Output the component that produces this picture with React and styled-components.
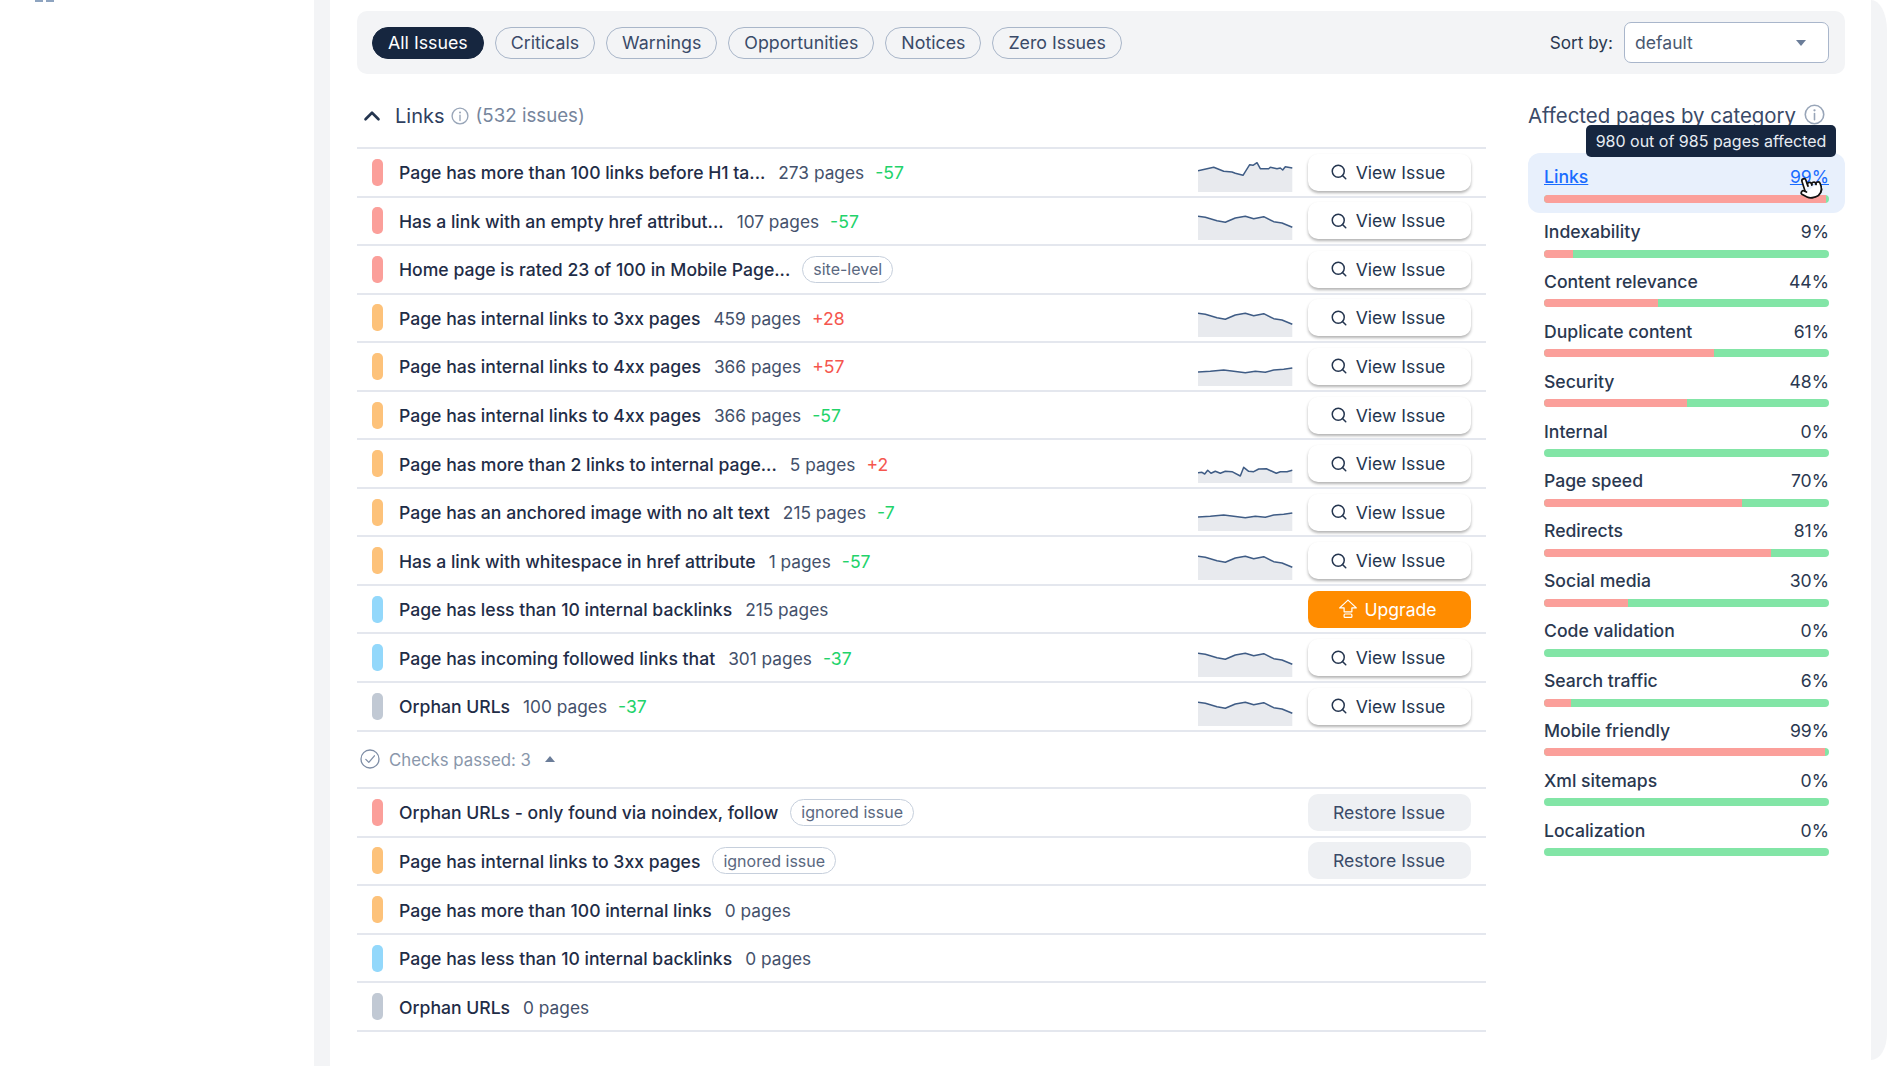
import React from "react";
import styled, { createGlobalStyle } from "styled-components";
import { Search, ChevronUp, Pointer } from "lucide-react";

const GlobalStyle = createGlobalStyle`
  html, body {
    margin: 0;
    background: #fff;
    overflow: hidden;
  }
  * {
    box-sizing: border-box;
  }
  body {
    font-family: "Inter", "Noto Sans", sans-serif;
    color: #1f2d47;
  }
`;

const LEVELS = {
  critical: "#fb9f9a",
  warning: "#fdc27a",
  notice: "#93d8fb",
  none: "#c1c9d4",
};

const pointsToPath = (pts) => pts.map((p, i) => `${i ? "L" : "M"}${p[0]} ${p[1]}`).join(" ");

const SPARKS = {
  spike: [[0, 14.7], [15.7, 11.3], [25.7, 15.3], [34, 16], [37.3, 17.3], [45, 19.3], [51.7, 8.7], [55, 9.3], [59, 6.7], [62.3, 12.7], [70.7, 12.7], [72.3, 11.3], [79, 12.7], [82.3, 12], [84.7, 14], [87.3, 10.7], [94.3, 12]],
  soft: [[0, 12.3], [7.3, 13.3], [19, 16.7], [27.3, 18.3], [37.3, 14], [47.3, 12.3], [55.7, 14.7], [65.7, 12.7], [75.7, 17.7], [84, 19], [94.3, 23.3]],
  flat: [[0, 22], [12.3, 21.3], [25.7, 20], [35.7, 21.3], [47.3, 22.7], [57.3, 21.3], [67.3, 22.3], [75.7, 20], [85.7, 19.3], [94.3, 18]],
  jagged: [[0, 25.7], [4, 25.3], [6.7, 27], [9.7, 23.3], [13, 26.3], [17.3, 24.3], [22.3, 26.3], [27.3, 24.3], [34, 24.7], [42.3, 29], [45.7, 20.3], [50.7, 24.3], [55.7, 24.7], [60.7, 22], [68.3, 21.7], [78.3, 26.3], [82.3, 24.7], [89, 24.7], [94.3, 23.3]],
};

const FILTERS = ["All Issues", "Criticals", "Warnings", "Opportunities", "Notices", "Zero Issues"];

const ISSUES = [
  { level: "critical", title: "Page has more than 100 links before H1 ta...", pages: "273 pages", delta: "-57", spark: "spike" },
  { level: "critical", title: "Has a link with an empty href attribut...", pages: "107 pages", delta: "-57", spark: "soft" },
  { level: "critical", title: "Home page is rated 23 of 100 in Mobile Page...", tag: "site-level" },
  { level: "warning", title: "Page has internal links to 3xx pages", pages: "459 pages", delta: "+28", spark: "soft" },
  { level: "warning", title: "Page has internal links to 4xx pages", pages: "366 pages", delta: "+57", spark: "flat" },
  { level: "warning", title: "Page has internal links to 4xx pages", pages: "366 pages", delta: "-57" },
  { level: "warning", title: "Page has more than 2 links to internal page...", pages: "5 pages", delta: "+2", spark: "jagged" },
  { level: "warning", title: "Page has an anchored image with no alt text", pages: "215 pages", delta: "-7", spark: "flat" },
  { level: "warning", title: "Has a link with whitespace in href attribute", pages: "1 pages", delta: "-57", spark: "soft" },
  { level: "notice", title: "Page has less than 10 internal backlinks", pages: "215 pages", upgrade: true },
  { level: "notice", title: "Page has incoming followed links that", pages: "301 pages", delta: "-37", spark: "soft" },
  { level: "none", title: "Orphan URLs", pages: "100 pages", delta: "-37", spark: "soft" },
];

const PASSED = [
  { level: "critical", title: "Orphan URLs - only found via noindex, follow", tag: "ignored issue", restore: true },
  { level: "warning", title: "Page has internal links to 3xx pages", tag: "ignored issue", restore: true },
  { level: "warning", title: "Page has more than 100 internal links", pages: "0 pages" },
  { level: "notice", title: "Page has less than 10 internal backlinks", pages: "0 pages" },
  { level: "none", title: "Orphan URLs", pages: "0 pages" },
];

// name, label shown, width of the red part of the bar
const CATEGORIES = [
  ["Links", 99, 98.8],
  ["Indexability", 9, 10],
  ["Content relevance", 44, 40],
  ["Duplicate content", 61, 59.5],
  ["Security", 48, 50],
  ["Internal", 0, 0],
  ["Page speed", 70, 69.6],
  ["Redirects", 81, 79.7],
  ["Social media", 30, 29.5],
  ["Code validation", 0, 0],
  ["Search traffic", 6, 9.5],
  ["Mobile friendly", 99, 98.6],
  ["Xml sitemaps", 0, 0],
  ["Localization", 0, 0],
];

const InfoIcon = ({ size = 18, color = "#98a5b8" }) => (
  <svg width={size} height={size} viewBox="0 0 20 20" fill="none">
    <circle cx="10" cy="10" r="8.8" stroke={color} strokeWidth="1.5" />
    <circle cx="10" cy="6" r="1.1" fill={color} />
    <path d="M10 9v6" stroke={color} strokeWidth="1.5" strokeLinecap="round" />
  </svg>
);

const CheckIcon = () => (
  <svg width="20" height="20" viewBox="0 0 20 20" fill="none">
    <circle cx="10" cy="10" r="9" stroke="#7f8ea6" strokeWidth="1.3" />
    <path d="M5.8 10.4l3 3 5.6-6.6" stroke="#7f8ea6" strokeWidth="1.3" strokeLinecap="round" strokeLinejoin="round" />
  </svg>
);

const UpgradeIcon = () => (
  <svg width="20" height="20" viewBox="0 0 18 18" fill="none" stroke="#fff" strokeWidth="1.1" strokeLinejoin="round">
    <path d="M9 1L16.5 8H12.5V11.5H5.5V8H1.5Z" />
    <rect x="5.5" y="13.5" width="7" height="3" rx="0.8" />
  </svg>
);

const Sparkline = ({ type }) => {
  const pts = SPARKS[type];
  const line = pointsToPath(pts);
  return (
    <SparkBox width="95" height="36" viewBox="0 0 95 36">
      <path d={`${line} L94.3 36 L0 36 Z`} fill="#e8eaee" />
      <path d={line} fill="none" stroke="#3f5c85" strokeWidth="1.5" strokeLinejoin="round" />
    </SparkBox>
  );
};

const IssueRow = ({ issue }) => (
  <Row>
    <Level $color={LEVELS[issue.level]} />
    <Title>{issue.title}</Title>
    {issue.pages && <Pages>{issue.pages}</Pages>}
    {issue.delta && <Delta $up={issue.delta[0] === "+"}>{issue.delta}</Delta>}
    {issue.tag && <Tag>{issue.tag}</Tag>}
    <RowEnd>
      {issue.spark && <Sparkline type={issue.spark} />}
      {issue.upgrade && (
        <UpgradeButton>
          <UpgradeIcon />
          Upgrade
        </UpgradeButton>
      )}
      {issue.restore && <RestoreButton>Restore Issue</RestoreButton>}
      {!issue.upgrade && !issue.restore && issue.pages !== "0 pages" && (
        <ViewButton>
          <Search size={18} strokeWidth={2} />
          View Issue
        </ViewButton>
      )}
    </RowEnd>
  </Row>
);

export default function App() {
  return (
    <>
      <GlobalStyle />
      <Page>
        <Sidebar>
          <SideMark />
          <SideMark />
        </Sidebar>
        <Gutter />
        <Content>
          <FilterBar>
            <Pills>
              {FILTERS.map((f, i) => (
                <Pill key={f} $active={i === 0}>
                  {f}
                </Pill>
              ))}
            </Pills>
            <SortBox>
              <SortLabel>Sort by:</SortLabel>
              <Select>
                default
                <SelectArrow />
              </Select>
            </SortBox>
          </FilterBar>
          <Columns>
            <div>
              <SectionHeader>
                <ChevronUp size={26} strokeWidth={2.4} color="#24354f" />
                <SectionName>Links</SectionName>
                <InfoIcon />
                <SectionCount>(532 issues)</SectionCount>
              </SectionHeader>
              {ISSUES.map((issue, i) => (
                <IssueRow key={i} issue={issue} />
              ))}
              <PassedHeader>
                <CheckIcon />
                <PassedLabel>Checks passed: 3</PassedLabel>
                <PassedArrow />
              </PassedHeader>
              {PASSED.map((issue, i) => (
                <IssueRow key={i} issue={issue} />
              ))}
            </div>
            <aside>
              <SideHeader>
                <SideTitle>Affected pages by category</SideTitle>
                <InfoIcon size={21} />
              </SideHeader>
              <Categories>
                <Tooltip>980 out of 985 pages affected</Tooltip>
                {CATEGORIES.map(([name, value, bar], i) => (
                  <Category key={name} $active={i === 0}>
                    <CategoryHead $active={i === 0}>
                      <span>{name}</span>
                      <Percent>{value}%</Percent>
                    </CategoryHead>
                    <Track>
                      <TrackFill style={{ width: `${bar}%` }} />
                    </Track>
                    {i === 0 && (
                      <HandCursor>
                        <Pointer size={25} fill="#fff" stroke="#111" strokeWidth={1.6} />
                      </HandCursor>
                    )}
                  </Category>
                ))}
              </Categories>
            </aside>
          </Columns>
        </Content>
        <RightEdge />
      </Page>
    </>
  );
}

const Page = styled.div`
  display: flex;
  width: 1887px;
  height: 1066px;
  overflow: hidden;
  background: #fff;
`;

const Sidebar = styled.div`
  width: 314px;
  flex-shrink: 0;
  display: flex;
  gap: 3px;
  padding-left: 35px;
`;

const SideMark = styled.div`
  width: 8px;
  height: 2px;
  background: #8ea4c0;
`;

const Gutter = styled.div`
  width: 16px;
  flex-shrink: 0;
  background: #f3f4f6;
`;

const RightEdge = styled.div`
  width: 16px;
  height: 1060px;
  flex-shrink: 0;
  background: #f3f4f6;
  border-top-right-radius: 16px 30px;
  border-bottom-right-radius: 16px 26px;
`;

const Content = styled.main`
  flex: 1;
  padding: 11px 26px 0 27px;
`;

const FilterBar = styled.div`
  height: 63px;
  padding: 0 16px 0 15px;
  display: flex;
  align-items: center;
  justify-content: space-between;
  background: #f3f4f6;
  border-radius: 10px;
`;

const Pills = styled.div`
  display: flex;
  gap: 11px;
`;

const Pill = styled.div`
  height: 32px;
  padding: 0 15px;
  display: flex;
  align-items: center;
  font-size: 17.8px;
  border-radius: 16px;
  border: 1.5px solid ${(p) => (p.$active ? "#16263f" : "#a9b6c9")};
  background: ${(p) => (p.$active ? "#16263f" : "transparent")};
  color: ${(p) => (p.$active ? "#fff" : "#3a4a68")};
`;

const SortBox = styled.div`
  display: flex;
  align-items: center;
  gap: 11px;
`;

const SortLabel = styled.span`
  font-size: 17.2px;
  color: #2a3850;
`;

const Select = styled.div`
  width: 205px;
  height: 41px;
  padding: 0 10px;
  display: flex;
  align-items: center;
  position: relative;
  font-size: 17.6px;
  color: #4a5870;
  background: #fff;
  border: 1.5px solid #a9b6cb;
  border-radius: 7px;
`;

const SelectArrow = styled.i`
  margin-left: auto;
  margin-right: 12px;
  border-left: 5px solid transparent;
  border-right: 5px solid transparent;
  border-top: 6px solid #6b7d99;
`;

const Columns = styled.div`
  display: grid;
  grid-template-columns: 1129px 317px;
  column-gap: 42px;
`;

const SectionHeader = styled.div`
  height: 75px;
  padding: 29px 0 0 2px;
  display: flex;
  align-items: flex-start;
  border-bottom: 2px solid #e4e7ee;
  font-size: 20px;
  line-height: 26px;
  svg:nth-of-type(2) {
    margin: 4px 7px 0 6px;
  }
`;

const SectionName = styled.span`
  margin-left: 10px;
  color: #2f4060;
`;

const SectionCount = styled.span`
  font-size: 18.7px;
  color: #76859c;
`;

const Row = styled.div`
  height: 48.55px;
  padding: 0 15px;
  display: flex;
  align-items: center;
  border-bottom: 2px solid #e4e7ee;
  font-size: 17.6px;
`;

const Level = styled.div`
  width: 11px;
  height: 27px;
  margin-right: 16px;
  flex-shrink: 0;
  border-radius: 5px;
  background: ${(p) => p.$color};
`;

const Title = styled.span`
  margin-top: 1px;
  font-weight: 450;
  color: #1f2d47;
  white-space: nowrap;
`;

const Pages = styled.span`
  margin: 1px 0 0 13px;
  font-size: 17.3px;
  color: #44516b;
  white-space: nowrap;
`;

const Delta = styled.span`
  margin: 1px 0 0 11px;
  color: ${(p) => (p.$up ? "#f5564e" : "#22d36a")};
`;

const Tag = styled.span`
  height: 27px;
  margin-left: 12px;
  padding: 0 10px;
  display: flex;
  align-items: center;
  font-size: 16px;
  color: #5a6880;
  border: 1.5px solid #c6cfdc;
  border-radius: 14px;
  white-space: nowrap;
`;

const RowEnd = styled.div`
  margin-left: auto;
  height: 100%;
  display: flex;
  align-items: center;
`;

const SparkBox = styled.svg`
  align-self: flex-end;
  margin: 0 15px 4px 0;
`;

const ButtonBase = styled.div`
  width: 163px;
  height: 37px;
  padding-right: 4px;
  display: flex;
  align-items: center;
  justify-content: center;
  gap: 8px;
  font-size: 17.6px;
  border-radius: 10px;
`;

const ViewButton = styled(ButtonBase)`
  color: #24354f;
  background: #fff;
  box-shadow: 0 2px 3px rgba(0, 0, 0, 0.3);
`;

const UpgradeButton = styled(ButtonBase)`
  gap: 6px;
  color: #fff;
  background: #ff8c00;
`;

const RestoreButton = styled(ButtonBase)`
  padding-right: 1px;
  color: #3a4a68;
  background: #eef0f3;
`;

const PassedHeader = styled.div`
  height: 57.6px;
  padding-left: 3px;
  display: flex;
  align-items: center;
  border-bottom: 2px solid #e4e7ee;
`;

const PassedLabel = styled.span`
  margin: 1px 0 0 9px;
  font-size: 16.8px;
  color: #8a97ab;
`;

const PassedArrow = styled.i`
  margin-left: 14px;
  border-left: 5px solid transparent;
  border-right: 5px solid transparent;
  border-bottom: 6px solid #6b7d99;
`;

const SideHeader = styled.div`
  height: 79px;
  padding-top: 30px;
  display: flex;
  align-items: flex-start;
  gap: 8px;
`;

const SideTitle = styled.span`
  font-size: 20.4px;
  line-height: 24px;
  color: #3a4a68;
`;

const Categories = styled.div`
  position: relative;
`;

const Tooltip = styled.div`
  position: absolute;
  top: -28px;
  right: 9px;
  width: 250px;
  height: 32px;
  display: flex;
  align-items: center;
  justify-content: center;
  font-size: 16px;
  color: #e7ecf3;
  background: #16263f;
  border-radius: 5px;
  z-index: 2;
`;

const Category = styled.div`
  position: relative;
  height: ${(p) => (p.$active ? "60px" : "49.9px")};
  padding: ${(p) => (p.$active ? "13.5px 16px 0" : "8.5px 16px 0")};
  background: ${(p) => (p.$active ? "#e8f0fc" : "transparent")};
  border-radius: 12px;
`;

const CategoryHead = styled.div`
  height: 20px;
  margin-bottom: ${(p) => (p.$active ? "8.5px" : "8px")};
  display: flex;
  align-items: center;
  justify-content: space-between;
  font-size: 17.6px;
  font-weight: 450;
  color: ${(p) => (p.$active ? "#1a6cff" : "#2a3850")};
  text-decoration: ${(p) => (p.$active ? "underline" : "none")};
`;

const Percent = styled.span`
  font-weight: 400;
  color: inherit;
`;

const Track = styled.div`
  height: 8px;
  overflow: hidden;
  background: #82e5a6;
  border-radius: 4px;
`;

const TrackFill = styled.div`
  height: 100%;
  background: #fb9f9a;
`;

const HandCursor = styled.div`
  position: absolute;
  top: 22px;
  right: 22px;
  line-height: 0;
  transform: rotate(-18deg);
`;
